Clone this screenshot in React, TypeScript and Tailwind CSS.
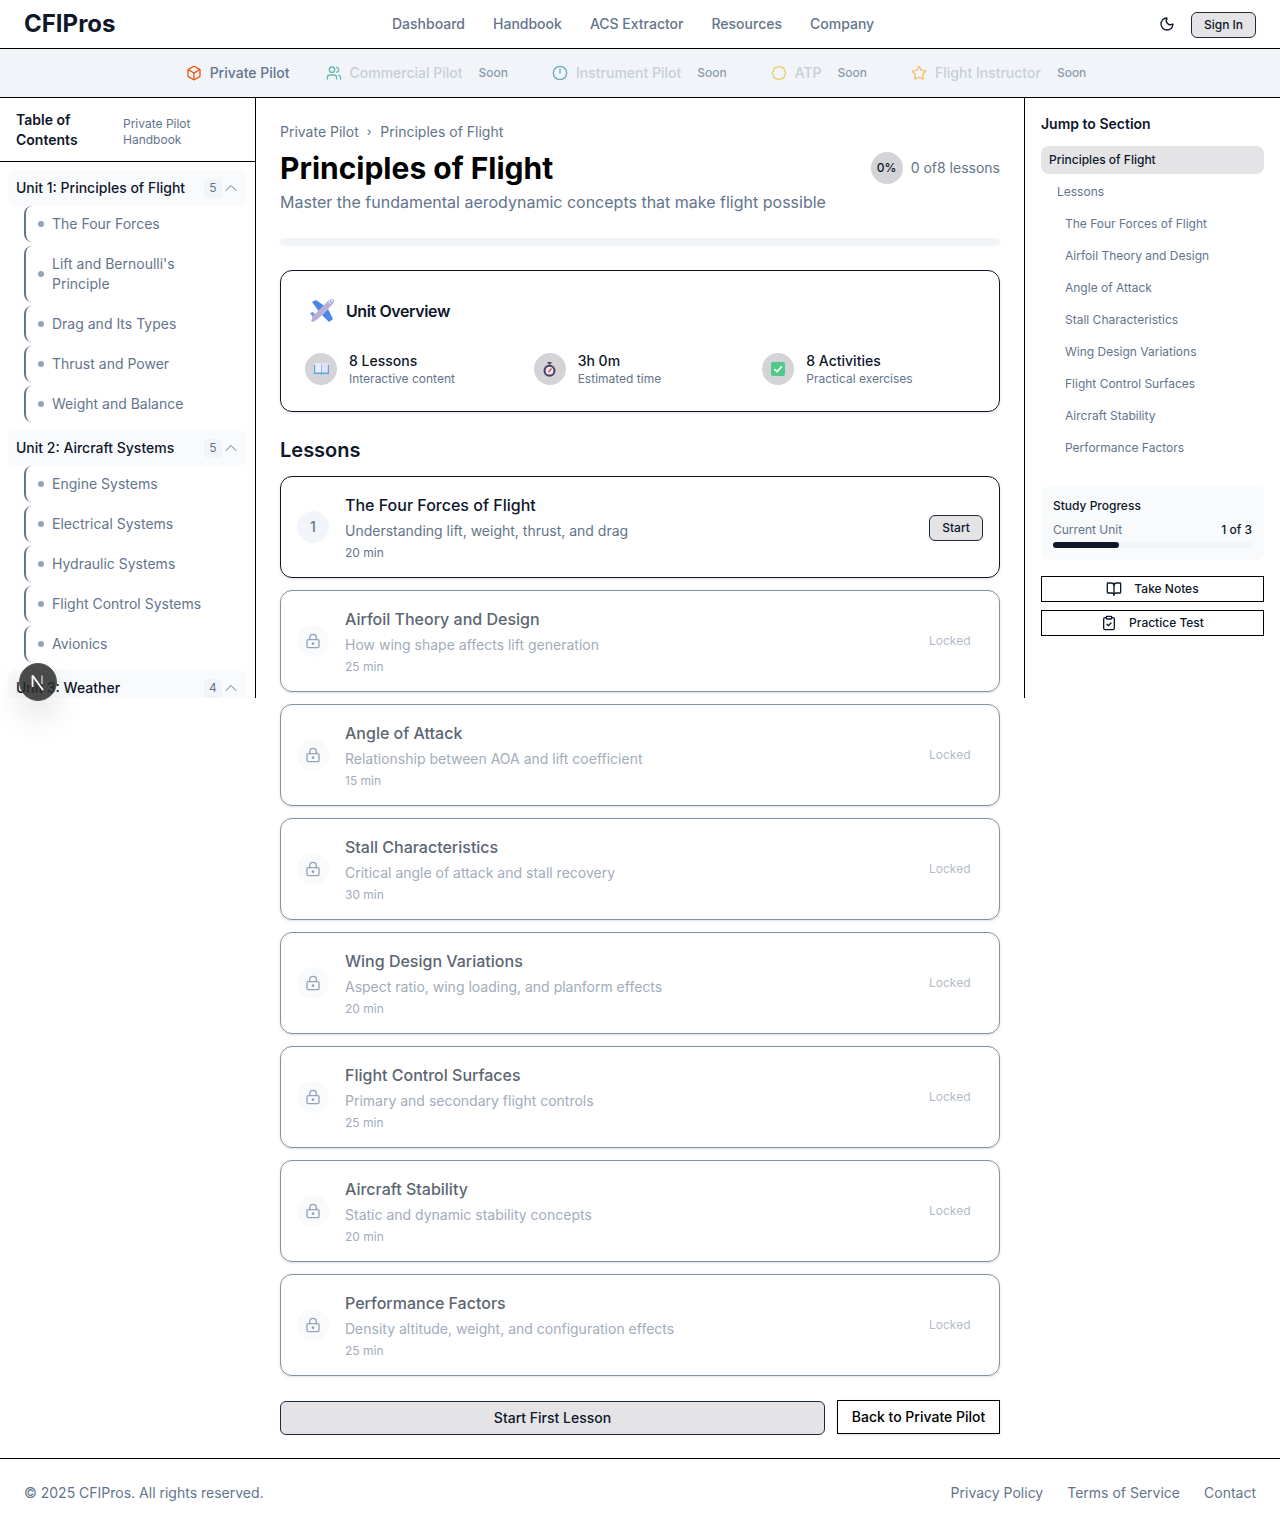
import { Box, Users, Clock12, Badge, Star, Moon, ChevronUp, LockKeyhole, BookOpen, ClipboardCheck } from "lucide-react";

const font = "font-['Inter','Liberation_Sans',sans-serif]";

function PlaneEmoji() {
  return (
    <svg width="26" height="26" viewBox="0 0 26 26">
      <path d="M3 4 L7 2 L17 9 L11 15 Z" fill="#4a86e8" />
      <path d="M13 17 L19 11 L24 21 L20 24 Z" fill="#4a86e8" />
      <path d="M1 15 L4 14 L8 18 L5 21 Z" fill="#6f9be6" />
      <path d="M24 1 C26 2 25 5 23 7 L9 21 L4 24 L2 23 L4 18 L19 3 C21 1 23 1 24 1 Z" fill="#b9aed6" />
      <path d="M19 4 C21 2 23 1 24 2 L24 4 L21 6 Z" fill="#dfe4f5" />
      <path d="M21 3 L23 5" stroke="#4a9ad8" strokeWidth="1" />
    </svg>
  );
}
function BookEmoji() {
  return (
    <svg width="15" height="12" viewBox="0 0 15 12">
      <path d="M0 2 H15 V11 H8.5 L7.5 12 L6.5 11 H0 Z" fill="#5ba4e0" />
      <rect x="1.2" y="0" width="6" height="9.5" fill="#ececf8" />
      <rect x="7.8" y="0" width="6" height="9.5" fill="#e2e2f2" />
    </svg>
  );
}
function StopwatchEmoji() {
  return (
    <svg width="13" height="15" viewBox="0 0 13 15">
      <rect x="4.5" y="0" width="4" height="1.6" fill="#4d3f5e" />
      <rect x="5.5" y="1" width="2" height="2.5" fill="#6b5a7b" />
      <circle cx="6.5" cy="8.7" r="6" fill="#4d3f5e" />
      <circle cx="6.5" cy="8.7" r="3.9" fill="#ece6ee" />
      <path d="M5.5 10 L8.5 6.5" stroke="#d8405a" strokeWidth="1.3" />
    </svg>
  );
}
function CheckEmoji() {
  return (
    <svg width="14" height="14" viewBox="0 0 14 14">
      <rect x="0" y="0" width="14" height="14" rx="2" fill="#4fc98a" />
      <path d="M3.5 7.2 L6 9.8 L10.8 4.4" stroke="#fff" strokeWidth="1.7" fill="none" />
    </svg>
  );
}

function NBadge() {
  return (
    <div className="absolute left-[20px] top-[664px] w-[36px] h-[36px] rounded-full bg-[#2a2a2a]/85 border border-[#555] shadow-[0_16px_32px_rgba(0,0,0,0.12)] flex items-center justify-center box-content -m-px">
      <svg width="18" height="18" viewBox="0 0 18 18" fill="none">
        <path d="M3.5 2.5 V14" stroke="#fff" strokeWidth="1.8" />
        <path d="M3.5 2.5 L14 17" stroke="#fff" strokeWidth="1.8" />
        <path d="M13 2.5 V11" stroke="#bbb" strokeWidth="1.6" />
      </svg>
    </div>
  );
}

const tiers = [
  { name: "Private Pilot", Icon: Box, color: "text-[#ea580c]", soon: false },
  { name: "Commercial Pilot", Icon: Users, color: "text-[#0d9488]", soon: true },
  { name: "Instrument Pilot", Icon: Clock12, color: "text-[#0e7490]", soon: true },
  { name: "ATP", Icon: Badge, color: "text-[#eab308]", soon: true },
  { name: "Flight Instructor", Icon: Star, color: "text-[#f59e0b]", soon: true },
];

const units = [
  { title: "Unit 1: Principles of Flight", count: 5, items: ["The Four Forces", "Lift and Bernoulli's Principle", "Drag and Its Types", "Thrust and Power", "Weight and Balance"] },
  { title: "Unit 2: Aircraft Systems", count: 5, items: ["Engine Systems", "Electrical Systems", "Hydraulic Systems", "Flight Control Systems", "Avionics"] },
  { title: "Unit 3: Weather", count: 4, items: [] as string[] },
];

const lessons = [
  ["The Four Forces of Flight", "Understanding lift, weight, thrust, and drag", "20 min"],
  ["Airfoil Theory and Design", "How wing shape affects lift generation", "25 min"],
  ["Angle of Attack", "Relationship between AOA and lift coefficient", "15 min"],
  ["Stall Characteristics", "Critical angle of attack and stall recovery", "30 min"],
  ["Wing Design Variations", "Aspect ratio, wing loading, and planform effects", "20 min"],
  ["Flight Control Surfaces", "Primary and secondary flight controls", "25 min"],
  ["Aircraft Stability", "Static and dynamic stability concepts", "20 min"],
  ["Performance Factors", "Density altitude, weight, and configuration effects", "25 min"],
];

const stats = [
  { Emoji: BookEmoji, title: "8 Lessons", sub: "Interactive content" },
  { Emoji: StopwatchEmoji, title: "3h 0m", sub: "Estimated time" },
  { Emoji: CheckEmoji, title: "8 Activities", sub: "Practical exercises" },
];

export default function App() {
  return (
    <div className={`relative bg-white text-[#0f172a] w-[1280px] min-h-[1527px] ${font}`}>
      <header className="h-[49px] border-b border-black flex items-center px-6">
        <div className="w-[368px] text-2xl font-bold text-[#0f172a]">CFIPros</div>
        <nav className="flex gap-7 text-sm font-medium text-[#64748b]">
          {["Dashboard", "Handbook", "ACS Extractor", "Resources", "Company"].map((n) => (
            <span key={n}>{n}</span>
          ))}
        </nav>
        <div className="ml-auto flex items-center gap-4">
          <Moon size={16} className="text-[#0f172a]" />
          <button className="h-[26px] w-[65px] mt-[1px] rounded-md border border-[#1e293b] bg-[#e4e4e7] text-xs font-medium text-[#0f172a]">Sign In</button>
        </div>
      </header>

      <div className="h-[49px] bg-[#f1f5f9] border-b border-black flex items-center justify-center pl-[2px]">
        {tiers.map(({ name, Icon, color, soon }) => (
          <div key={name} className={"flex items-center gap-2 pl-[17px] " + (soon ? "pr-[17px]" : "pr-[19px]")}>
            <Icon size={16} className={color + (soon ? " opacity-60" : "")} />
            <span className={"text-sm font-medium " + (soon ? "text-[#64748b] opacity-30" : "text-[#64748b]")}>{name}</span>
            {soon && <span className="pl-2 pr-[10px] text-xs font-medium text-[#64748b] opacity-70">Soon</span>}
          </div>
        ))}
      </div>

      <div className="flex items-start">
        <aside className="w-64 h-[600px] shrink-0 border-r border-black overflow-hidden">
          <div className="h-[64px] border-b border-black flex items-center pl-4">
            <h2 className="w-[107px] text-sm font-semibold leading-5 text-[#0f172a]">Table of Contents</h2>
            <p className="w-[80px] mt-[5px] text-xs leading-4 text-[#64748b]">Private Pilot Handbook</p>
          </div>
          <div className="px-2 pt-2 flex flex-col gap-2">
            {units.map((u) => (
              <div key={u.title}>
                <div className="h-9 rounded-lg bg-[#f8fafc] flex items-center pl-2 pr-[8px]">
                  <span className="flex-1 text-sm font-medium text-[#0f172a]">{u.title}</span>
                  <span className="w-[18px] h-[19px] rounded bg-[#f1f5f9] flex items-center justify-center text-xs text-[#64748b]">{u.count}</span>
                  <ChevronUp size={20} strokeWidth={1.2} className="-ml-[1px] -mr-[2px] text-[#64748b]" />
                </div>
                {u.items.length > 0 && (
                  <div className="ml-4 flex flex-col gap-1">
                    {u.items.map((i) => (
                      <div key={i} className="flex items-center gap-2 border-l-2 border-[#64748b] rounded-lg px-3 py-2 text-sm leading-5 text-[#64748b]">
                        <span className="w-[6px] h-[6px] rounded-full bg-[#94a3b8] shrink-0" />
                        <span>{i}</span>
                      </div>
                    ))}
                  </div>
                )}
              </div>
            ))}
          </div>
        </aside>

        <main className="flex-1 min-w-0 px-6 pt-6 pb-[23px]">
          <div className="flex items-center text-sm text-[#64748b] h-5">
            <span>Private Pilot</span>
            <span className="ml-2 mr-[9px] text-xs">›</span>
            <span>Principles of Flight</span>
          </div>
          <div className="mt-2 flex items-start justify-between">
            <div>
              <h1 className="text-3xl font-bold text-black h-9">Principles of Flight</h1>
              <p className="mt-1 text-base text-[#64748b]">Master the fundamental aerodynamic concepts that make flight possible</p>
            </div>
            <div className="flex items-center gap-2 h-9 mt-0">
              <div className="w-8 h-8 rounded-full bg-[#d4d4d8] flex items-center justify-center text-xs font-medium text-[#0f172a]">0%</div>
              <span className="text-sm text-[#64748b]">0 of8 lessons</span>
            </div>
          </div>
          <div className="mt-6 h-2 rounded-full bg-[#f1f5f9]" />

          <section className="mt-6 h-[142px] rounded-xl border border-[#0f172a] shadow-sm p-6">
            <div className="flex items-center gap-[11px] h-8 pl-1">
              <PlaneEmoji />
              <h2 className="text-base font-semibold tracking-tight text-[#0f172a]">Unit Overview</h2>
            </div>
            <div className="mt-6 grid grid-cols-3 gap-4">
              {stats.map(({ Emoji, title, sub }) => (
                <div key={title} className="flex items-center gap-3">
                  <div className="w-8 h-8 rounded-full bg-[#d4d4d8] flex items-center justify-center"><Emoji /></div>
                  <div>
                    <div className="text-sm font-medium leading-5 text-[#0f172a]">{title}</div>
                    <div className="text-xs leading-4 text-[#64748b]">{sub}</div>
                  </div>
                </div>
              ))}
            </div>
          </section>

          <h2 className="mt-6 text-xl font-semibold leading-7 text-[#0f172a]">Lessons</h2>
          <div className="mt-3 flex flex-col gap-3">
            {lessons.map(([t, d, m], idx) => {
              const locked = idx > 0;
              return (
                <div key={t} className={"h-[102px] rounded-xl border shadow-sm flex items-center px-4 " + (locked ? "border-[#64748b]/80" : "border-[#0f172a]")}>
                  <div className={"w-8 h-8 rounded-full flex items-center justify-center text-sm font-medium text-[#64748b] " + (locked ? "bg-[#f8fafc]" : "bg-[#f1f5f9]")}>
                    {locked ? <LockKeyhole size={16} className="-mt-[1px] text-[#94a3b8]" /> : "1"}
                  </div>
                  <div className="ml-4 flex-1">
                    <div className={"text-base font-medium leading-6 " + (locked ? "text-[#5c6572]" : "text-[#0f172a]")}>{t}</div>
                    <div className={"mt-1 text-sm leading-5 " + (locked ? "text-[#a2acba]" : "text-[#64748b]")}>{d}</div>
                    <div className={"mt-1 text-xs leading-4 " + (locked ? "text-[#a2acba]" : "text-[#64748b]")}>{m}</div>
                  </div>
                  {locked ? (
                    <span className="w-[54px] text-xs text-[#b4bcc8] pb-[1px]">Locked</span>
                  ) : (
                    <button className="w-[54px] h-[26px] mt-[1px] rounded-md border border-[#1e293b] bg-[#e4e4e7] text-xs font-medium text-[#0f172a]">Start</button>
                  )}
                </div>
              );
            })}
          </div>

          <div className="mt-6 flex gap-3 items-start">
            <button className="flex-1 h-[34px] mt-px rounded-md border border-[#1e293b] bg-[#e4e4e7] text-sm font-medium text-[#0f172a]">Start First Lesson</button>
            <button className="w-[163px] h-[34px] border border-black bg-white shadow-sm text-sm font-medium text-black">Back to Private Pilot</button>
          </div>
        </main>

        <aside className="w-64 h-[600px] shrink-0 border-l border-black pl-4 pr-4 pt-4">
          <h3 className="text-sm font-semibold leading-5 text-[#0f172a]">Jump to Section</h3>
          <div className="mt-3 flex flex-col gap-1 text-xs text-[#64748b]">
            <div className="h-7 rounded-lg bg-[#e4e4e7] flex items-center px-2 font-medium text-[#0f172a]">Principles of Flight</div>
            <div className="h-7 flex items-center pl-4">Lessons</div>
            {lessons.map(([t]) => (
              <div key={t} className="h-7 flex items-center pl-6">{t}</div>
            ))}
          </div>
          <div className="mt-6 h-[74px] rounded-lg bg-[#f8fafc] p-3">
            <div className="text-xs font-medium leading-4 text-[#0f172a]">Study Progress</div>
            <div className="mt-2 flex justify-between text-xs leading-4">
              <span className="text-[#64748b]">Current Unit</span>
              <span className="font-medium text-[#0f172a]">1 of 3</span>
            </div>
            <div className="mt-1 h-[6px] rounded-full bg-[#f1f5f9]">
              <div className="h-full w-1/3 rounded-full bg-[#0f172a]" />
            </div>
          </div>
          <div className="mt-4 flex flex-col gap-2">
            <button className="h-[26px] border border-black flex items-center justify-center gap-3 text-xs font-medium text-[#0f172a]"><BookOpen size={16} />Take Notes</button>
            <button className="h-[26px] border border-black flex items-center justify-center gap-3 text-xs font-medium text-[#0f172a]"><ClipboardCheck size={16} />Practice Test</button>
          </div>
        </aside>
      </div>

      <footer className="h-[69px] border-t border-black flex items-center justify-between px-6 text-sm text-[#64748b]">
        <span>© 2025 CFIPros. All rights reserved.</span>
        <div className="flex gap-6">
          <span>Privacy Policy</span>
          <span>Terms of Service</span>
          <span>Contact</span>
        </div>
      </footer>

      <NBadge />
    </div>
  );
}
